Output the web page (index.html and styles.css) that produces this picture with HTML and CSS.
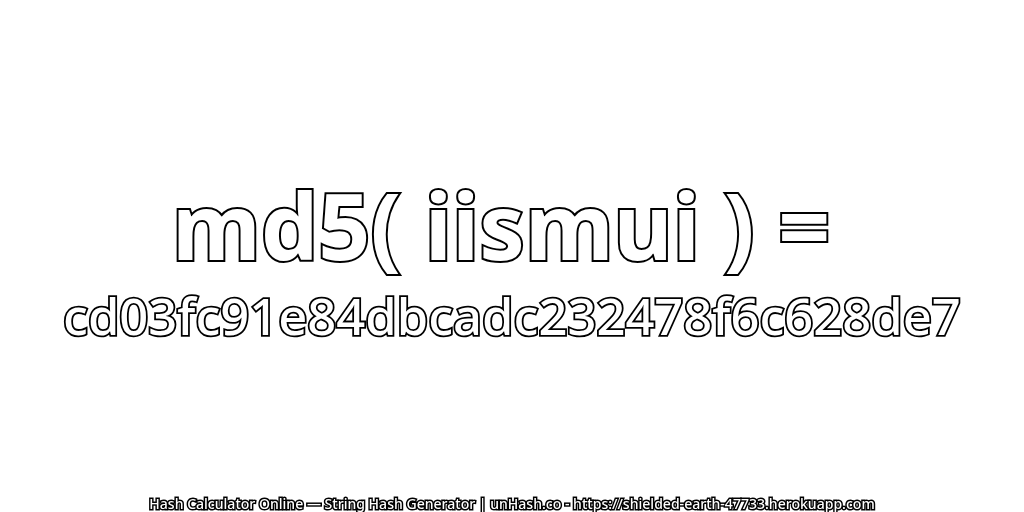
FILE: index.html
```html
<!DOCTYPE html>
<html lang="en">
<head>
<meta charset="utf-8">
<title>unHash</title>
<link rel="stylesheet" href="styles.css">
</head>
<body>
<main class="hero">
<h1 class="line line-top">md5( iismui ) =</h1>
<p class="line line-hash">cd03fc91e84dbcadc232478f6c628de7</p>
</main>
<footer class="foot">Hash Calculator Online — String Hash Generator | unHash.co - https://shielded-earth-47733.herokuapp.com</footer>
</body>
</html>
```
FILE: styles.css
```css
html, body { margin: 0; height: 100%; background: #fff; }
body { width: 1024px; height: 512px; overflow: hidden; display: flex; flex-direction: column; font-family: "Noto Sans", sans-serif; color: #fff; }
.hero { flex: 1; display: flex; flex-direction: column; align-items: center; padding-top: 168px; }
.line { margin: 0; white-space: nowrap; -webkit-text-stroke: 4px #000; paint-order: stroke fill; will-change: transform; }
.line-top { font-size: 91px; font-weight: 700; height: 114px; line-height: 114px; padding-right: 22px; }
.line-hash { font-size: 50.7px; font-weight: 500; height: 60px; line-height: 68px; -webkit-text-stroke-width: 3.6px; }
.foot { text-align: center; font-size: 14.05px; line-height: 16px; font-weight: 500; -webkit-text-stroke: 3px #000; paint-order: stroke fill; white-space: nowrap; will-change: transform; }
```
